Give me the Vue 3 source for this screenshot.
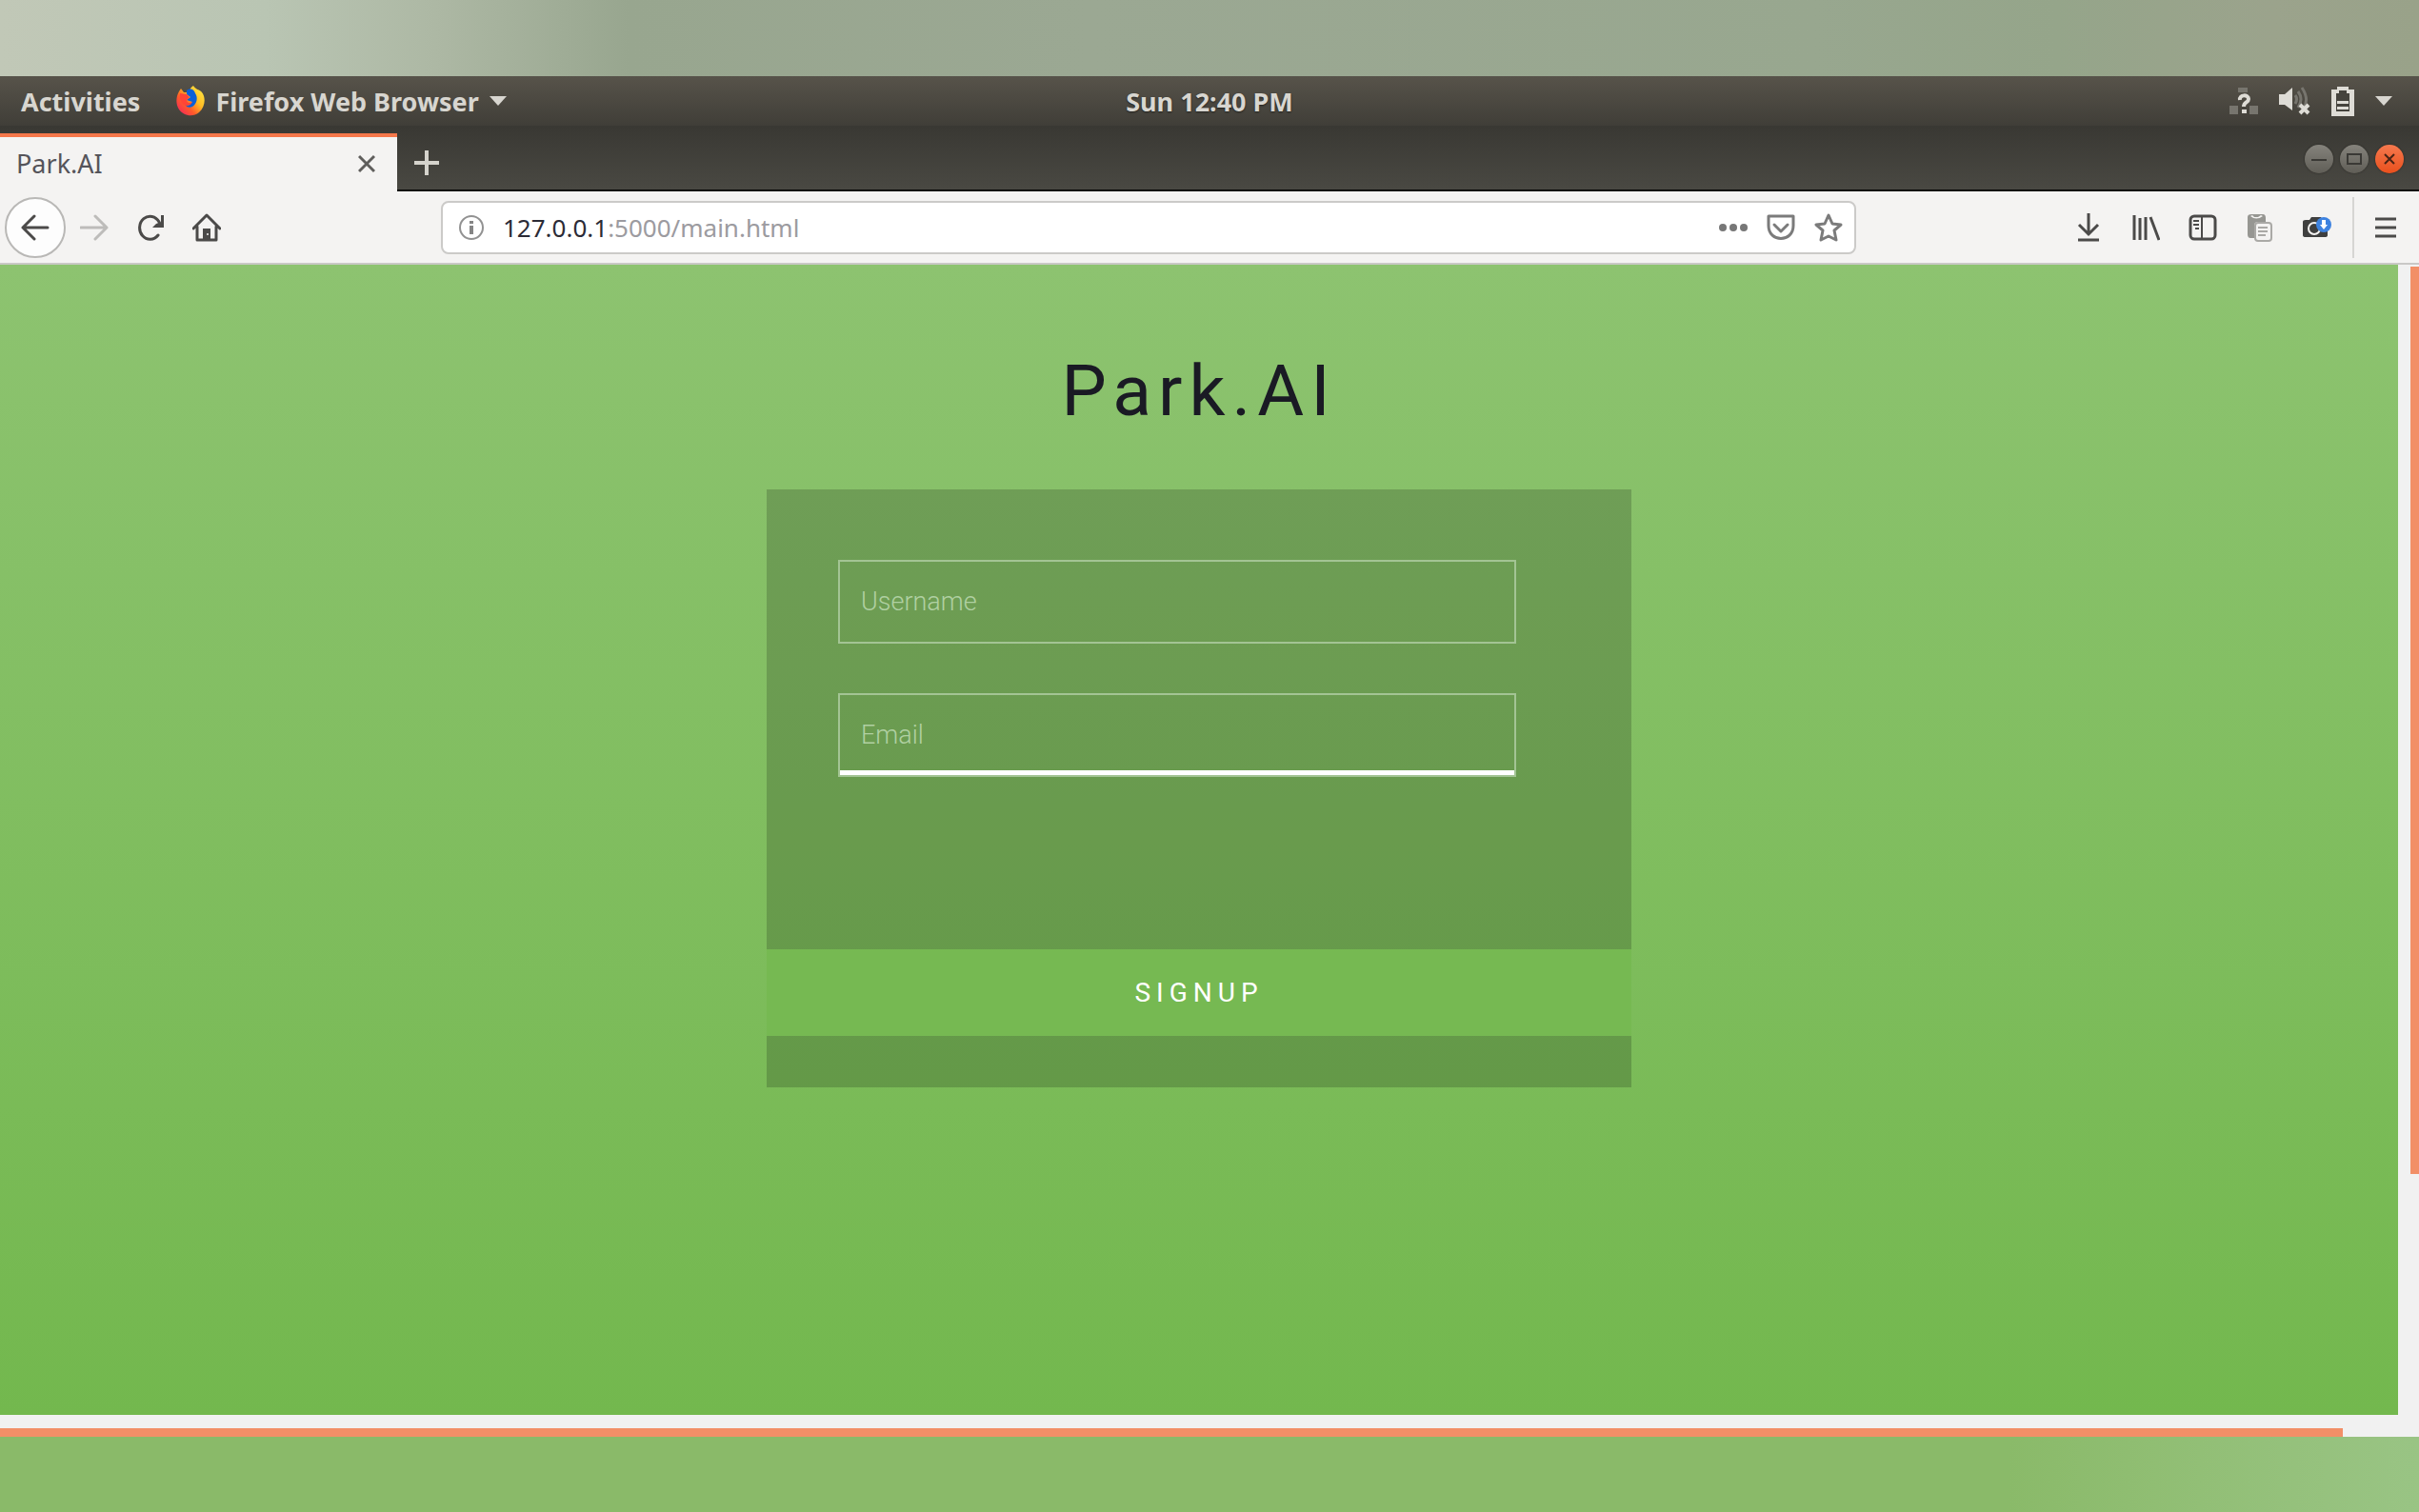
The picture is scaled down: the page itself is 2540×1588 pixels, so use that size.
<template>
  <div class="desktop">
    <!-- system top bar -->
    <header class="topbar">
      <div class="topbar-left">
        <button type="button" class="plain activities">Activities</button>
        <button type="button" class="plain app-menu">
          <svg width="30" height="32" viewBox="0 0 30 32">
            <defs>
              <linearGradient id="fox" x1="1" y1="0" x2="0" y2="1">
                <stop offset="0" stop-color="#fff04a" />
                <stop offset="0.4" stop-color="#ffbd25" />
                <stop offset="0.65" stop-color="#ff5a2a" />
                <stop offset="1" stop-color="#f0186a" />
              </linearGradient>
            </defs>
            <path d="M3 6C0 11-1 19 3 25C7 31 17 34 24 28C31 22 31 12 27 7C25 4 20 4 18 0C14 3 14 5 14 7L8 7L5 3Z" fill="url(#fox)" />
            <path d="M11 5C15 2 19 4 20 8C23 12 22 19 17 22C14 24 10 22 9 19C12 20 15 19 17 17L11 15L15 12L11 9Z" fill="#0a5fd8" />
            <path d="M4 8L11 9L14 12L11 15C11 18 14 19 17 17C15 22 9 22 6 18C4 15 3 11 4 8Z" fill="#ff4536" />
          </svg>
          <span>Firefox Web Browser</span>
          <svg width="18" height="10" viewBox="0 0 18 10"><path d="M0 0H18L9 10Z" fill="#d8d6d0" /></svg>
        </button>
      </div>
      <time class="clock">Sun 12:40 PM</time>
      <div class="tray">
        <svg width="30" height="30" viewBox="0 0 30 30">
          <path d="M9 1H19V6H9ZM0 20H9V29H0ZM21 20H30V29H21Z" fill="#77756e" />
          <path d="M11 14C10 8 20 8 20 13C20 17 15 16 15 21" fill="none" stroke="#dedcd6" stroke-width="4" />
          <rect x="13" y="24" width="5" height="4" fill="#dedcd6" />
        </svg>
        <svg width="33" height="30" viewBox="0 0 33 30">
          <path d="M0 8H6L14 1V25L6 19H0Z" fill="#dedcd6" />
          <path d="M17 9Q20 13 17 18M20 5Q26 13 20 22M24 1Q32 13 26 22" fill="none" stroke="#77756e" stroke-width="3" />
          <path d="M22 19L31 28M31 19L22 28" stroke="#dedcd6" stroke-width="4" />
        </svg>
        <svg width="24" height="32" viewBox="0 0 24 32">
          <path d="M6 1H18V4H24V32H0V4H6Z" fill="#dedcd6" />
          <path d="M8 5H16V8H19V27H5V8H8Z" fill="#45433d" />
          <path d="M6 16H18V19H6ZM6 22H18V25H6Z" fill="#dedcd6" />
        </svg>
        <svg width="18" height="10" viewBox="0 0 18 10"><path d="M0 0H18L9 10Z" fill="#d8d6d0" /></svg>
      </div>
    </header>

    <!-- tab strip -->
    <div class="tabstrip">
      <div class="tab">
        <span>{{ title }}</span>
        <button type="button" class="plain" aria-label="Close tab">
          <svg width="18" height="20" viewBox="0 0 18 20"><path d="M1 2L17 18M17 2L1 18" stroke="#5f5e5c" stroke-width="3" /></svg>
        </button>
      </div>
      <button type="button" class="plain new-tab" aria-label="New tab">
        <svg width="28" height="28" viewBox="0 0 28 28"><path d="M14 1V27M1 14H27" stroke="#d5d3cc" stroke-width="4" /></svg>
      </button>
      <div class="window-buttons">
        <button type="button" class="plain round" aria-label="Minimize">
          <svg width="16" height="16" viewBox="0 0 16 16"><path d="M0 9H16" stroke="#3a3935" stroke-width="2" /></svg>
        </button>
        <button type="button" class="plain round" aria-label="Maximize">
          <svg width="16" height="16" viewBox="0 0 16 16"><rect x="1" y="3" width="14" height="10" fill="none" stroke="#3a3935" stroke-width="2" /></svg>
        </button>
        <button type="button" class="plain round close" aria-label="Close">
          <svg width="16" height="16" viewBox="0 0 16 16"><path d="M3 3L13 13M13 3L3 13" stroke="#4a2415" stroke-width="2" /></svg>
        </button>
      </div>
    </div>

    <!-- navigation bar -->
    <nav class="navbar">
      <div class="nav-left">
        <button type="button" class="plain back" aria-label="Back">
          <svg width="30" height="28" viewBox="0 0 30 28"><path d="M28 14H2M14 2L2 14L14 26" class="line" /></svg>
        </button>
        <button type="button" class="plain" aria-label="Forward">
          <svg width="30" height="28" viewBox="0 0 30 28"><path d="M1 14H28M16 2L28 14L16 26" class="line pale" /></svg>
        </button>
        <button type="button" class="plain" aria-label="Reload">
          <svg width="28" height="28" viewBox="0 0 28 28">
            <path d="M22 22A11 12 0 1 1 23 8" class="line" />
            <path d="M28 1V14H16L20 10L25 8V1Z" fill="#4b4a49" />
          </svg>
        </button>
        <button type="button" class="plain" aria-label="Home">
          <svg width="30" height="30" viewBox="0 0 30 30">
            <path d="M1 16L15 2L29 16M5 14V28H25V14" class="line" />
            <path d="M11 16H19V28H11Z" fill="#4b4a49" />
            <circle cx="16" cy="22" r="1" fill="#f4f3f2" />
          </svg>
        </button>
      </div>
      <div class="urlbar">
        <svg width="26" height="26" viewBox="0 0 26 26">
          <circle cx="13" cy="13" r="12" fill="none" stroke="#929292" stroke-width="2" />
          <path d="M11 6H15V9H11ZM11 11H15V20H11Z" fill="#858585" />
        </svg>
        <span class="address"><b>127.0.0.1</b>:5000/main.html</span>
        <button type="button" class="plain" aria-label="Page actions">
          <svg width="30" height="8" viewBox="0 0 30 8"><circle v-for="x in [4, 15, 26]" :key="x" :cx="x" cy="4" r="4" fill="#777" /></svg>
        </button>
        <button type="button" class="plain" aria-label="Save to Pocket">
          <svg width="30" height="28" viewBox="0 0 30 28">
            <path d="M2 2H28V12C28 30 2 30 2 12Z" class="line grey" />
            <path d="M8 11L15 18L22 11" class="line grey" />
          </svg>
        </button>
        <button type="button" class="plain" aria-label="Bookmark this page">
          <svg width="30" height="30" viewBox="0 0 30 30"><path d="M15 2L19 11L28 12L21 18L23 28L15 24L7 28L9 18L2 12L11 11Z" class="line grey" /></svg>
        </button>
      </div>
      <div class="nav-right">
        <button type="button" class="plain" aria-label="Downloads">
          <svg width="30" height="30" viewBox="0 0 30 30"><path d="M15 0V21M5 12L15 22L25 12M4 28H26" class="line square" /></svg>
        </button>
        <button type="button" class="plain" aria-label="Library">
          <svg width="30" height="28" viewBox="0 0 30 28"><path d="M3 1V27M9 4V27M15 3V27M20 3L29 27" class="line square" /></svg>
        </button>
        <button type="button" class="plain" aria-label="Sidebars">
          <svg width="30" height="28" viewBox="0 0 30 28">
            <rect x="2" y="2" width="26" height="24" rx="4" class="line" />
            <path d="M14 3V25M5 7H11M5 11H11M7 15H11" stroke="#4b4a49" stroke-width="2" />
          </svg>
        </button>
        <button type="button" class="plain" aria-label="Copy">
          <svg width="30" height="30" viewBox="0 0 30 30">
            <path d="M2 4Q2 1 6 1H18Q21 1 21 5V9H13Q9 9 9 13V26H5Q2 26 2 22Z" fill="#969692" />
            <path d="M5 3Q11 8 18 3L16 2L13 4H9L7 2Z" fill="#f4f3f2" />
            <rect x="10" y="10" width="17" height="19" rx="3" fill="#f4f3f2" stroke="#aaa9a6" stroke-width="2" />
            <path d="M13 15H23M13 19H23M13 23H21" stroke="#aaa9a6" stroke-width="2" />
          </svg>
        </button>
        <button type="button" class="plain" aria-label="Screenshot">
          <svg width="30" height="24" viewBox="0 0 30 24">
            <path d="M0 6Q0 4 3 4H7L9 1H19L21 4H26V20Q26 22 23 22H3Q0 22 0 20Z" fill="#3f3f3f" />
            <circle cx="12" cy="13" r="6" fill="#3f3f3f" stroke="#f4f3f2" stroke-width="2" />
            <circle cx="22" cy="9" r="8" fill="#3d82e0" />
            <path d="M20 4H24V9H26L22 14L18 9H20Z" fill="#fff" />
          </svg>
        </button>
        <span class="separator"></span>
        <button type="button" class="plain" aria-label="Open menu">
          <svg width="22" height="24" viewBox="0 0 22 24"><path d="M0 3H22M0 12H22M0 21H22" class="line square" /></svg>
        </button>
      </div>
    </nav>

    <!-- web page with its scrollbars -->
    <div class="viewport">
      <main class="page">
        <h1>{{ title }}</h1>
        <form class="signup" @submit.prevent>
          <input
            v-for="field in fields"
            :key="field.id"
            v-model="field.value"
            class="field"
            :class="{ current: field.id === current }"
            :type="field.type"
            :placeholder="field.label"
            :aria-label="field.label"
            @focus="current = field.id"
          >
          <button type="submit" class="submit">SIGNUP</button>
        </form>
      </main>
      <div class="scroll-y"><div class="thumb"></div></div>
      <div class="scroll-x"><div class="thumb"></div></div>
    </div>
  </div>
</template>

<script setup>
import { ref } from 'vue'

const title = 'Park.AI'

// field that shows the thick underline
const current = ref('email')

const fields = ref([
  { id: 'username', label: 'Username', type: 'text', value: '' },
  { id: 'email', label: 'Email', type: 'email', value: '' }
])
</script>

<style>
body {
  margin: 0;
}
</style>

<style scoped>
.desktop {
  display: flex;
  flex-direction: column;
  box-sizing: border-box;
  min-height: 100vh;
  padding: 80px 0 79px;
  background:
    linear-gradient(90deg, #c1c8b7, #b9c5b3 11%, #adb8a4 18%, #98a68f 26%, #9ba893 45%, #98a78f 75%, #95a58a 85%, #9ba38c 94%, #99a289) top / 100% 80px no-repeat,
    linear-gradient(90deg, #8aba69 83%, #92bf76 91%, #99c484);
  font-family: "Noto Sans", "Open Sans", sans-serif;
  font-size: 26px;
}

svg {
  display: block;
  flex: none;
}

.plain {
  display: flex;
  align-items: center;
  justify-content: center;
  padding: 0;
  border: none;
  background: none;
  color: inherit;
  font: inherit;
  cursor: pointer;
}

.topbar {
  display: grid;
  grid-template-columns: 1fr auto 1fr;
  align-items: center;
  height: 52px;
  padding: 0 22px;
  background: linear-gradient(#57534a, #403e38);
  color: #d8d6d0;
  font-size: 27px;
  font-weight: 700;
  text-shadow: 0 1px 2px #22211e;
}

.topbar-left {
  display: flex;
  gap: 38px;
}

.app-menu {
  gap: 11px;
}

.tray {
  display: flex;
  align-items: center;
  justify-content: flex-end;
  gap: 22px;
  padding-right: 6px;
}

.tabstrip {
  display: flex;
  align-items: center;
  height: 69px;
  background: linear-gradient(#393833, #4a4943);
  box-shadow: inset 0 -2px #0c0c0b;
}

.tab {
  display: flex;
  align-items: center;
  justify-content: space-between;
  align-self: flex-end;
  box-sizing: border-box;
  width: 417px;
  height: 61px;
  padding: 0 23px 2px 17px;
  border-top: 4px solid #f5774a;
  background: #f4f3f2;
  color: #55545a;
  font-size: 27px;
}

.new-tab {
  margin: 8px auto 0 17px;
}

.window-buttons {
  display: flex;
  gap: 7px;
  padding-right: 16px;
}

.round {
  width: 30px;
  height: 30px;
  border-radius: 50%;
  background: linear-gradient(#85837c, #605e57);
  box-shadow: 0 0 2px #252420;
}

.close {
  background: linear-gradient(#f6794e, #e9501d);
}

.navbar {
  display: flex;
  align-items: center;
  box-sizing: border-box;
  height: 77px;
  padding: 0 24px 0 5px;
  border-bottom: 2px solid #c9c8c6;
  background: #f4f3f2;
}

.nav-left {
  display: flex;
  align-items: center;
  gap: 30px;
  width: 458px;
}

.back {
  box-sizing: border-box;
  width: 64px;
  height: 64px;
  margin-right: -15px;
  border: 2px solid #b9b8b6;
  border-radius: 50%;
  background: #fdfdfd;
}

.line {
  fill: none;
  stroke: #4b4a49;
  stroke-width: 3;
  stroke-linecap: round;
  stroke-linejoin: round;
}

.pale {
  stroke: #bdbcba;
}

.grey {
  stroke: #7b7b7b;
}

.square {
  stroke-linecap: butt;
  stroke-linejoin: miter;
}

.urlbar {
  display: flex;
  flex: 1;
  align-items: center;
  gap: 20px;
  box-sizing: border-box;
  height: 56px;
  padding: 0 12px 0 17px;
  border: 2px solid #cbcac8;
  border-radius: 8px;
  background: #fff;
}

.address {
  flex: 1;
  color: #9c9ba0;
}

.address b {
  color: #2b2b36;
  font-weight: 400;
}

.nav-right {
  display: flex;
  align-items: center;
  justify-content: flex-end;
  gap: 30px;
  width: 567px;
}

.separator {
  width: 2px;
  height: 64px;
  margin: 0 -8px;
  background: #d6d5d3;
}

.viewport {
  display: grid;
  flex: 1;
  grid-template-columns: 1fr 22px;
  grid-template-rows: 1fr 23px;
  background: #f1f1f1;
}

.page {
  padding: 84px 0 80px;
  background: linear-gradient(#8dc370, #73b84e);
  font-family: Roboto, "Liberation Sans", sans-serif;
}

h1 {
  margin: 0 0 56px;
  color: #1a1a24;
  font-size: 75px;
  font-weight: 400;
  line-height: 96px;
  letter-spacing: 7px;
  text-align: center;
}

.signup {
  display: flex;
  flex-direction: column;
  gap: 52px;
  box-sizing: border-box;
  width: 908px;
  margin: 0 auto;
  padding: 74px 0 54px;
  background: rgba(0, 0, 0, 0.18);
}

.field {
  box-sizing: border-box;
  height: 88px;
  margin: 0 121px 0 75px;
  padding: 0 22px;
  border: 2px solid #a3c494;
  border-radius: 0;
  outline: none;
  background: transparent;
  color: #fff;
  font: 300 27px Roboto, "Liberation Sans", sans-serif;
}

.field::placeholder {
  color: #b0d0a2;
  opacity: 1;
}

.field.current {
  box-shadow: inset 0 -5px #fff;
}

.submit {
  height: 91px;
  margin-top: 129px;
  padding: 0;
  border: none;
  background: #76b952;
  color: #fff;
  font: 400 28px Roboto, "Liberation Sans", sans-serif;
  letter-spacing: 6px;
  cursor: pointer;
}

.scroll-y {
  padding: 2px 0 0 13px;
}

.scroll-x {
  grid-column: 1 / -1;
  padding: 14px 80px 0 0;
}

.thumb {
  background: #f28f67;
}

.scroll-y .thumb {
  height: 79%;
}

.scroll-x .thumb {
  height: 9px;
}
</style>
